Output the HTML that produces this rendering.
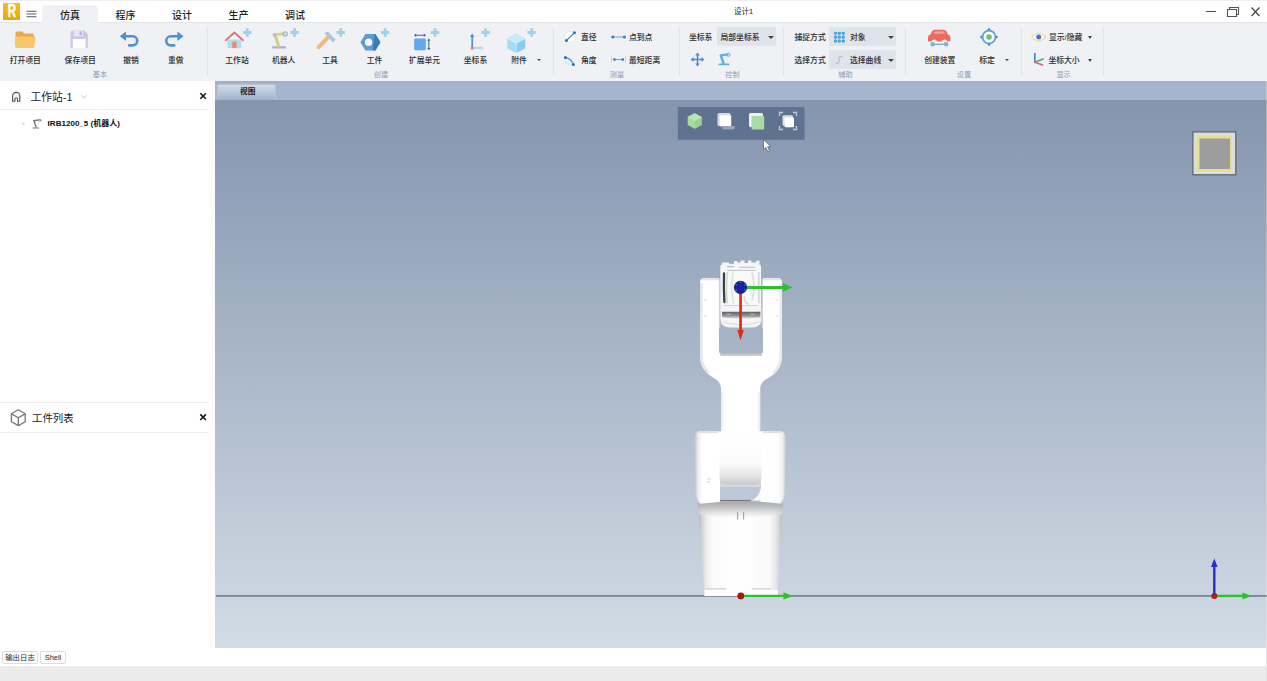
<!DOCTYPE html>
<html lang="zh-CN">
<head>
<meta charset="utf-8">
<title>设计1</title>
<style>
*{box-sizing:border-box;margin:0;padding:0}
html,body{width:1267px;height:681px;overflow:hidden;background:#fff}
body{position:relative;font-family:"Liberation Sans","Noto Sans CJK SC",sans-serif;color:#222;-webkit-font-smoothing:antialiased}
.abs{position:absolute}
.t{position:absolute;white-space:nowrap;text-align:center;transform:translateX(-50%)}
.tl{position:absolute;white-space:nowrap}
/* title / tab row */
#titlebar{left:0;top:0;width:1267px;height:22px;background:#fff;border-top:1px solid #efefef}
.tab{z-index:2;font-size:10px;line-height:14px;top:7.5px;color:#1c1c1c;font-weight:500}
#tabactive{z-index:1;left:42px;top:4px;width:56px;height:19px;background:#f0f1f4;border-radius:4px 4px 0 0}
/* ribbon */
#ribbon{left:0;top:22px;width:1267px;height:59px;background:#f0f1f4;border-top:1px solid #e4e5e8}
.lbl{font-size:7.8px;line-height:10px;top:55.5px;color:#2a2a2a;font-weight:500}
.grp{font-size:7.2px;line-height:10px;top:69.5px;color:#8b9bb8}
.sep{position:absolute;top:27px;width:1px;height:49px;background:#e1e3e8}
.sm{font-size:7.8px;line-height:10px;color:#2a2a2a;font-weight:500}
.combo{position:absolute;background:#dfe3ea;height:19px}
.dd{position:absolute;width:0;height:0;border-left:3px solid transparent;border-right:3px solid transparent;border-top:3.5px solid #444}
.dds{position:absolute;width:0;height:0;border-left:2px solid transparent;border-right:2px solid transparent;border-top:2.5px solid #444}
/* left panel */
#left{left:0;top:81px;width:215px;height:567px;background:#fff}
#leftgap{left:209.5px;top:81px;width:5.5px;height:567px;background:#fdfcfb}
.hline{position:absolute;left:0;width:209px;height:1px;background:#ececec}
/* viewport */
#vp{left:215px;top:81px;width:1052px;height:567px;overflow:hidden;background:linear-gradient(#8595ae,#d2dce6);}
#vptabs{left:0;top:0;width:1052px;height:19px;background:linear-gradient(#a3afc2,#a5b5ce 4px,#a6b6ce)}
#vptab{left:1.5px;top:3px;width:59.5px;height:16px;padding-left:3px;background:linear-gradient(#d3dbe8,#a3b1c8);border:1px solid #b9c3d4;border-bottom:none;border-radius:2px 2px 0 0;font-size:7.7px;line-height:14px;text-align:center;color:#222;font-weight:bold}
#vpbody{left:0;top:19px;width:1052px;height:548px;background:linear-gradient(#8595ae,#d2dce6)}
/* bottom */
#bottom{left:0;top:648px;width:1267px;height:18px;background:#fff}
#status{left:0;top:666px;width:1267px;height:15px;background:#ebebeb}
.btab{position:absolute;top:3px;height:13px;border:1px solid #dcdcdc;border-radius:2px;font-size:7.4px;line-height:11px;text-align:center;color:#222;background:#fff}
</style>
</head>
<body>
<!-- TITLE / TAB ROW -->
<div id="titlebar" class="abs">
  <div id="tabactive" class="abs"></div>
  <svg class="abs" style="left:3px;top:2px" width="17" height="17" viewBox="0 0 17 17">
    <defs><linearGradient id="lg" x1="0" y1="0" x2="0" y2="1"><stop offset="0" stop-color="#f5bf18"/><stop offset="1" stop-color="#eaa40e"/></linearGradient></defs>
    <rect width="17" height="17" fill="url(#lg)"/>
    <text x="0" y="0" text-anchor="middle" transform="translate(9 14.1) scale(.66 1)" font-family="Liberation Sans, sans-serif" font-weight="bold" font-size="17.5" fill="#fff" stroke="#fff" stroke-width=".5">R</text>
  </svg>
  <svg class="abs" style="left:26px;top:9px" width="11" height="8" viewBox="0 0 11 8"><path d="M0.5 1.2H10.5M0.5 4H10.5M0.5 6.7H10.5" stroke="#5a5a5a" stroke-width="1.1"/></svg>
  <div class="t tab" style="left:70px">仿真</div>
  <div class="t tab" style="left:125.5px">程序</div>
  <div class="t tab" style="left:182px">设计</div>
  <div class="t tab" style="left:238.5px">生产</div>
  <div class="t tab" style="left:295px">调试</div>
  <div class="t" style="left:743.5px;top:6px;font-size:7.5px;line-height:10px;color:#222">设计1</div>
  <!-- window controls -->
  <svg class="abs" style="left:1200px;top:1.5px" width="64" height="18" viewBox="0 0 64 18">
    <path d="M6 8.5H16" stroke="#555" stroke-width="1.1" fill="none"/>
    <path d="M27.5 6.5H36.5V13.5H27.5ZM29.5 6.5V4.5H38.5V11.5H36.5" stroke="#555" stroke-width="1.1" fill="none"/>
    <path d="M51.5 4.5L59.5 13M59.5 4.5L51.5 13" stroke="#444" stroke-width="1.2" fill="none"/>
  </svg>
</div>

<!-- RIBBON -->
<div id="ribbon" class="abs"></div>
<div id="ribbonitems" class="abs" style="left:0;top:0;width:1267px;height:81px">
<div class="t lbl" style="left:25.3px">打开项目</div>
<div class="t lbl" style="left:80.2px">保存项目</div>
<div class="t lbl" style="left:131px">撤销</div>
<div class="t lbl" style="left:175.8px">重做</div>
<div class="t lbl" style="left:237px">工作站</div>
<div class="t lbl" style="left:283.7px">机器人</div>
<div class="t lbl" style="left:330px">工具</div>
<div class="t lbl" style="left:374.6px">工件</div>
<div class="t lbl" style="left:424.5px">扩展单元</div>
<div class="t lbl" style="left:475.5px">坐标系</div>
<div class="t lbl" style="left:519px">附件</div>
<div class="t lbl" style="left:939.8px">创建装置</div>
<div class="t lbl" style="left:987px">标定</div>
<div class="t grp" style="left:100px">基本</div>
<div class="t grp" style="left:381px">创建</div>
<div class="t grp" style="left:617px">测量</div>
<div class="t grp" style="left:732.4px">控制</div>
<div class="t grp" style="left:845.4px">辅助</div>
<div class="t grp" style="left:964px">设置</div>
<div class="t grp" style="left:1063.6px">显示</div>
<div class="sep" style="left:206.7px"></div>
<div class="sep" style="left:553px"></div>
<div class="sep" style="left:679px"></div>
<div class="sep" style="left:783.3px"></div>
<div class="sep" style="left:905px"></div>
<div class="sep" style="left:1021px"></div>
<div class="sep" style="left:1103px"></div>
<div class="tl sm" style="left:581px;top:33px">直径</div>
<div class="tl sm" style="left:581px;top:55.6px">角度</div>
<div class="tl sm" style="left:629px;top:33px">点到点</div>
<div class="tl sm" style="left:629px;top:55.6px">最短距离</div>
<div class="tl sm" style="left:689px;top:33px">坐标系</div>
<div class="combo" style="left:717px;top:27px;width:59px"></div>
<div class="tl sm" style="left:720.5px;top:33px">局部坐标系</div>
<div class="dd" style="left:768px;top:35.5px"></div>
<div class="tl sm" style="left:794.5px;top:33px">捕捉方式</div>
<div class="tl sm" style="left:794.5px;top:55.6px">选择方式</div>
<div class="combo" style="left:829px;top:27px;width:67px"></div>
<div class="combo" style="left:829px;top:50px;width:67px"></div>
<div class="tl sm" style="left:850px;top:33px">对象</div>
<div class="tl sm" style="left:850px;top:55.6px">选择曲线</div>
<div class="dd" style="left:888px;top:35.5px"></div>
<div class="dd" style="left:888px;top:58.5px"></div>
<div class="tl sm" style="left:1049px;top:33px">显示/隐藏</div>
<div class="tl sm" style="left:1048.4px;top:55.6px">坐标大小</div>
<div class="dd" style="left:1087.5px;top:36px;border-left-width:2.5px;border-right-width:2.5px;border-top-width:3px"></div>
<div class="dd" style="left:1087.5px;top:58.5px;border-left-width:2.5px;border-right-width:2.5px;border-top-width:3px"></div>
<div class="dds" style="left:536.7px;top:58.5px"></div>
<div class="dds" style="left:1004.7px;top:58.5px"></div>
<svg class="abs" style="left:0;top:0" width="1267" height="81" viewBox="0 0 1267 81"><g>
<path d="M15.5 33.2q0-1.6 1.6-1.6h5.2l1.8 2h8.2q1.6 0 1.6 1.6v11q0 1.6-1.6 1.6h-15.2q-1.6 0-1.6-1.6z" fill="#eaa947"/>
<path d="M15.5 37.8q0-1.4 1.4-1.4h17.2q1.6 0 1.4 1.5l-1.1 8.5q-.2 1.4-1.6 1.4h-15.7q-1.6 0-1.6-1.6z" fill="#f8c66b"/>
</g>
<g>
<path d="M70.5 32q0-1.5 1.5-1.5h12.2l3.6 3.6v12.4q0 1.5-1.5 1.5h-14.3q-1.5 0-1.5-1.5z" fill="#cfc6ea"/>
<rect x="74" y="30.5" width="9" height="5.8" fill="#e9e6f6"/>
<rect x="79.6" y="31.4" width="2.1" height="3.8" fill="#a6b7e0"/>
<rect x="72.8" y="39" width="12.8" height="9" fill="#ffffff"/>
</g>
<g fill="none" stroke="#4f8fd2" stroke-width="2.6" stroke-linecap="round" stroke-linejoin="round">
<path d="M124 36.2h8.6a4.6 4.6 0 0 1 0 9.2h-3.4"/>
</g><path d="M119.8 36.2l6.2-4.8v9.6z" fill="#4f8fd2"/>
<g fill="none" stroke="#4f8fd2" stroke-width="2.6" stroke-linecap="round" stroke-linejoin="round">
<path d="M179.4 36.2h-8.6a4.6 4.6 0 0 0 0 9.2h3.4"/>
</g><path d="M183.6 36.2l-6.2-4.8v9.6z" fill="#4f8fd2"/>
<g>
<path d="M227.6 39.5h13.6v8.6h-13.6z" fill="#a9dff0"/>
<path d="M225.8 40.2l8.6-7.8l8.6 7.8" fill="none" stroke="#e8737b" stroke-width="2" stroke-linecap="round" stroke-linejoin="round"/>
<rect x="232.2" y="41.6" width="4.4" height="6.5" fill="#f08a6c"/>
</g><path d="M245.9 28.3h2.8v2.8h2.8v2.8h-2.8v2.8h-2.8v-2.8h-2.8v-2.8h2.8z" fill="#9acdec" opacity=".92"/>
<g>
<path d="M273 47.4h12" stroke="#b4a8dc" stroke-width="2.2" stroke-linecap="round"/>
<path d="M278.6 46l-3.4-10.8" stroke="#cfd27a" stroke-width="3" stroke-linecap="round"/>
<path d="M274.4 34.6l9.6-.8" stroke="#d9d27a" stroke-width="2.6" stroke-linecap="round"/>
<circle cx="285.2" cy="34" r="2.1" fill="none" stroke="#9bb6d8" stroke-width="1.3"/>
<circle cx="274.4" cy="34.8" r="1.9" fill="#c3b5e6"/>
</g><path d="M293.1 28.3h2.8v2.8h2.8v2.8h-2.8v2.8h-2.8v-2.8h-2.8v-2.8h2.8z" fill="#9acdec" opacity=".92"/>
<g>
<path d="M318.6 47.2l9.2-9.6" stroke="#f4b77c" stroke-width="4" stroke-linecap="round"/>
<path d="M324.4 33.2l3.4-1.6l7.8 8l-2.6 2.6z" fill="#a9c3e2"/>
</g><path d="M339.3 28.3h2.8v2.8h2.8v2.8h-2.8v2.8h-2.8v-2.8h-2.8v-2.8h2.8z" fill="#9acdec" opacity=".92"/>
<g>
<path d="M360.4 42.2l5-8.2h10l5 8.2l-5 8.2h-10z" fill="#5c9bd6"/>
<path d="M374.4 34h1l5 8.2l-5 8.2h-2.4z" fill="#3f7ab8"/>
<circle cx="368.6" cy="42.2" r="3.7" fill="#fdf3ee"/>
</g><path d="M383.8 28.3h2.8v2.8h2.8v2.8h-2.8v2.8h-2.8v-2.8h-2.8v-2.8h2.8z" fill="#9acdec" opacity=".92"/>
<g>
<rect x="414.2" y="38.6" width="11.6" height="11.6" rx="1" fill="#62a8f0"/>
<path d="M414.6 35.2h10.8M428.8 39.6v9.6" stroke="#3b6ea8" stroke-width="1.1"/>
<path d="M414 35.2l2.2-1.7v3.4zM426 35.2l-2.2-1.7v3.4zM428.8 38.6l-1.7 2.2h3.4zM428.8 50.2l-1.7-2.2h3.4z" fill="#3b6ea8"/>
</g><path d="M433.6 28.3h2.8v2.8h2.8v2.8h-2.8v2.8h-2.8v-2.8h-2.8v-2.8h2.8z" fill="#9acdec" opacity=".92"/>
<g>
<path d="M472.2 35.5v12.2" stroke="#4f8fd2" stroke-width="1.7"/>
<path d="M472.2 33.6l-2.3 3.4h4.6z" fill="#4f8fd2"/>
<path d="M472.2 48h9" stroke="#9ecbe6" stroke-width="1.5"/>
<path d="M484 48l-3.2-2v4z" fill="#c9d6e4"/>
<circle cx="472.2" cy="48" r="1.7" fill="#ef7f7f"/>
</g><path d="M484.2 28.3h2.8v2.8h2.8v2.8h-2.8v2.8h-2.8v-2.8h-2.8v-2.8h2.8z" fill="#9acdec" opacity=".92"/>
<g>
<path d="M516.2 33.6l9 4.8v9.8l-9 4.8l-9-4.8v-9.8z" fill="#a3dcf6"/>
<path d="M516.2 43.2l9-4.8v9.8l-9 4.8z" fill="#8bcdf0"/>
<path d="M516.2 43.2l-9-4.8l9-4.8l9 4.8z" fill="#c4ebfb"/>
<path d="M516.2 52.6v-9.4l-8.6-4.6M516.2 43.2l8.6-4.6" fill="none" stroke="#e6f6fe" stroke-width=".7"/>
</g><path d="M530.2 28.3h2.8v2.8h2.8v2.8h-2.8v2.8h-2.8v-2.8h-2.8v-2.8h2.8z" fill="#9acdec" opacity=".92"/>
<g>
<circle cx="570.3" cy="36.8" r="5.6" fill="#fff" stroke="#dfe7f0" stroke-width=".8"/>
<path d="M566.6 40.4l7.6-7.4" stroke="#3f8fd6" stroke-width="1.3"/>
<circle cx="566.4" cy="40.6" r="1.5" fill="#2d6fb4"/><circle cx="574.4" cy="32.8" r="1.5" fill="#2d6fb4"/>
</g>
<g>
<path d="M565.6 57.6q5.6.8 7.6 6.6" fill="none" stroke="#3f8fd6" stroke-width="1.3"/>
<path d="M565.6 58v6.2h7.4" fill="none" stroke="#dbe6f2" stroke-width="1"/>
<circle cx="565.4" cy="57.4" r="1.5" fill="#2d6fb4"/><circle cx="573.4" cy="64.4" r="1.5" fill="#2d6fb4"/>
</g>
<g>
<path d="M613 37h11" stroke="#5aa6d8" stroke-width="1"/>
<circle cx="612.8" cy="37" r="1.5" fill="#2d7fc0"/><circle cx="624.4" cy="37" r="1.5" fill="#2d7fc0"/>
</g>
<g>
<path d="M611.6 56.4v6.6M625.6 56.4v6.6" stroke="#bcd4ea" stroke-width="1"/>
<path d="M614 59.6h9" stroke="#5aa6d8" stroke-width="1"/>
<circle cx="614.4" cy="59.6" r="1.4" fill="#2d7fc0"/><circle cx="622.8" cy="59.6" r="1.4" fill="#2d7fc0"/>
</g>
<g fill="#4f8fd2">
<path d="M696.7 54.5h1.6v10h-1.6z"/><path d="M692.5 58.7h10v1.6h-10z"/>
<path d="M697.5 52.6l2.4 2.9h-4.8zM697.5 66.4l2.4-2.9h-4.8zM690.6 59.5l2.9-2.4v4.8zM704.4 59.5l-2.9-2.4v4.8z"/>
</g>
<g>
<path d="M719.4 64.4h9" stroke="#5fb0e0" stroke-width="1.9" stroke-linecap="round"/>
<path d="M723.6 63.4l-2.6-7.4" stroke="#5fb0e0" stroke-width="2.4" stroke-linecap="round"/>
<path d="M720.6 55.4l7-1" stroke="#5fb0e0" stroke-width="2.2" stroke-linecap="round"/>
<circle cx="728.4" cy="54.8" r="1.6" fill="none" stroke="#5fb0e0" stroke-width="1"/>
</g>
<g fill="#2b8cc6"><rect x="834.2" y="32" width="2.6" height="2.6"/><rect x="834.2" y="35.9" width="2.6" height="2.6"/><rect x="834.2" y="39.8" width="2.6" height="2.6"/><rect x="838.1" y="32" width="2.6" height="2.6"/><rect x="838.1" y="35.9" width="2.6" height="2.6"/><rect x="838.1" y="39.8" width="2.6" height="2.6"/><rect x="842" y="32" width="2.6" height="2.6"/><rect x="842" y="35.9" width="2.6" height="2.6"/><rect x="842" y="39.8" width="2.6" height="2.6"/></g><path d="M835.5 31.6v11.2M839.4 31.6v11.2M843.3 31.6v11.2M833.8 33.3h11.2M833.8 37.2h11.2M833.8 41.1h11.2" stroke="#5ab2e0" stroke-width=".8"/>
<path d="M835.6 63.2h2.4q1 0 1-1v-4.6q0-1 1-1h2.6" fill="none" stroke="#c9a6dc" stroke-width="1"/>
<g>
<path d="M928 37.8q0-2.6 2.4-3.2l1.7-3.3q.8-1.6 2.6-1.6h9q1.8 0 2.6 1.6l1.7 3.3q2.4.6 2.4 3.2v2.8q0 1-1 1h-2a3.1 3.1 0 0 0-5.8 0h-4.4a3.1 3.1 0 0 0-5.8 0h-2.4q-1 0-1-1z" fill="#ee6a5e"/>
<path d="M933.4 33.8l1.2-2.3h9.2l1.2 2.3z" fill="#f7a59c"/>
<path d="M933 44.3h13" stroke="#6fa3c8" stroke-width="1.2"/>
<circle cx="932.7" cy="44.3" r="2.3" fill="#7fb0d0"/><circle cx="946.1" cy="44.3" r="2.3" fill="#7fb0d0"/>
</g>
<g>
<path d="M989 27.7l2.2 3h-4.4zM989 46.3l2.2-3h-4.4zM979.7 37l3-2.2v4.4zM998.3 37l-3-2.2v4.4z" fill="#3f7cc6"/>
<circle cx="989" cy="37" r="6.4" fill="#fff" stroke="#5a9ee0" stroke-width="1.7"/>
<circle cx="989" cy="37" r="2.8" fill="#6cc070"/>
</g>
<g>
<path d="M1031.6 37q7-7.6 14.2 0q-7.2 7.6-14.2 0z" fill="#fff" stroke="#ecd89a" stroke-width="1.1"/>
<circle cx="1038.7" cy="37" r="2.5" fill="#3f76c8"/>
</g>
<g fill="none" stroke-width="1.5" stroke-linecap="round">
<path d="M1034.8 53.4v8.8" stroke="#2f7fb8"/>
<path d="M1034.8 62.2l8.4-3.2" stroke="#4fa870"/>
<path d="M1034.8 62.2l7.8 2.8" stroke="#e0606a"/>
</g></svg>
</div>

<!-- LEFT PANEL -->
<div id="left" class="abs">
<div class="hline" style="top:27.5px"></div>
<div class="hline" style="top:320.5px"></div>
<div class="hline" style="top:351px"></div>
<svg class="abs" style="left:0;top:0" width="213" height="567" viewBox="0 81 213 567">
<path d="M12.6 101.2v-5.2a3.6 3.6 0 0 1 7.2 0v5.2h-2.3v-2.1a1.3 1.3 0 0 0-2.6 0v2.1z" fill="none" stroke="#4a4a4a" stroke-width="1.1" stroke-linejoin="round"/>
<path d="M81.3 95.2l2.7 2.6l2.7-2.6" fill="none" stroke="#c4c8d0" stroke-width="1"/>
<path d="M200.3 93.2l5.6 5.6M205.9 93.2l-5.6 5.6" stroke="#111" stroke-width="1.5"/>
<path d="M200.3 414.4l5.6 5.6M205.9 414.4l-5.6 5.6" stroke="#111" stroke-width="1.5"/>
<circle cx="23.4" cy="123.7" r="1.3" fill="#d8d8d8"/>
<g stroke="#777" fill="none" stroke-width="1" stroke-linecap="round">
<path d="M33 128h5.6"/><path d="M36 127l-1.8-5.8" stroke-width="1.4"/><path d="M33.6 120.6l5-.6" stroke-width="1.3"/><circle cx="39.8" cy="120.2" r="1.1" stroke-width=".8"/>
</g>
<g fill="none" stroke="#777" stroke-width="1.3" stroke-linejoin="round">
<path d="M18.3 409.8l6.9 3.9v8l-6.9 3.9l-6.9-3.9v-8z"/><path d="M11.6 413.9l6.7 3.8l6.7-3.8M18.3 417.7v7.6"/>
</g>
</svg>
<div class="tl" style="left:30.4px;top:8.5px;font-size:10.8px;line-height:14px;color:#1a1a1a">工作站-1</div>
<div class="tl" style="left:47.6px;top:37.7px;font-size:8.05px;line-height:10px;font-weight:bold;color:#111">IRB1200_5 (机器人)</div>
<div class="tl" style="left:32px;top:330.8px;font-size:10.4px;line-height:14px;color:#1a1a1a">工件列表</div>
</div>
<div id="leftgap" class="abs"></div>

<!-- VIEWPORT -->
<div id="vp" class="abs">
  <div id="vpbody" class="abs"></div>
  <div id="vptabs" class="abs"><div id="vptab" class="abs">视图</div></div>
<svg class="abs" style="left:0;top:0" width="1052" height="567" viewBox="215 81 1052 567">
<defs>
<linearGradient id="body" x1="0" y1="0" x2="1" y2="0"><stop offset="0" stop-color="#e4e6e9"/><stop offset=".12" stop-color="#fafafa"/><stop offset=".5" stop-color="#ffffff"/><stop offset=".88" stop-color="#f6f6f7"/><stop offset="1" stop-color="#dcdfe3"/></linearGradient>
<linearGradient id="base" x1="0" y1="0" x2="0" y2="1"><stop offset="0" stop-color="#f4f4f5"/><stop offset=".8" stop-color="#ececee"/><stop offset="1" stop-color="#fbfbfb"/></linearGradient>
</defs>
<!-- horizon -->
<rect x="216" y="595.2" width="1051" height="1.5" fill="#6a7482"/>
<defs>
<linearGradient id="gH" x1="0" y1="0" x2="1" y2="0"><stop offset="0" stop-color="#d9dcdf"/><stop offset=".1" stop-color="#f7f7f8"/><stop offset=".5" stop-color="#ffffff"/><stop offset=".9" stop-color="#f4f5f6"/><stop offset="1" stop-color="#d5d8dc"/></linearGradient>
<linearGradient id="gCyl" x1="0" y1="0" x2="0" y2="1"><stop offset="0" stop-color="#ffffff"/><stop offset=".6" stop-color="#fbfbfb"/><stop offset=".86" stop-color="#e2e3e5"/><stop offset="1" stop-color="#c9cbce"/></linearGradient>
<linearGradient id="gWin" x1="0" y1="0" x2="0" y2="1"><stop offset="0" stop-color="#f3f3f4"/><stop offset=".7" stop-color="#fdfdfd"/><stop offset="1" stop-color="#d9dadc"/></linearGradient>
<linearGradient id="gBase" x1="0" y1="0" x2="0" y2="1"><stop offset="0" stop-color="#eeeff0"/><stop offset=".12" stop-color="#f8f8f9"/><stop offset=".85" stop-color="#f1f1f3"/><stop offset=".93" stop-color="#e4e5e7"/><stop offset=".94" stop-color="#fdfdfd"/><stop offset="1" stop-color="#ffffff"/></linearGradient>
<linearGradient id="gWr" x1="0" y1="0" x2="0" y2="1"><stop offset="0" stop-color="#cfd0d2"/><stop offset=".35" stop-color="#e9e9ea"/><stop offset="1" stop-color="#f7f7f7"/></linearGradient>
<linearGradient id="gBand" x1="0" y1="0" x2="0" y2="1"><stop offset="0" stop-color="#5f6063"/><stop offset=".55" stop-color="#8b8c8f"/><stop offset="1" stop-color="#d9dadb"/></linearGradient>
<linearGradient id="gBaseH" x1="0" y1="0" x2="1" y2="0"><stop offset="0" stop-color="#a9acb1"/><stop offset=".04" stop-color="#cdd0d3"/><stop offset=".1" stop-color="#ebeced"/><stop offset=".17" stop-color="#fafafa"/><stop offset=".5" stop-color="#ffffff"/><stop offset=".84" stop-color="#f9f9f9"/><stop offset=".91" stop-color="#e9eaec"/><stop offset=".96" stop-color="#d2d4d7"/><stop offset="1" stop-color="#b1b4b9"/></linearGradient>
<linearGradient id="gBaseTop" x1="0" y1="0" x2="0" y2="1"><stop offset="0" stop-color="#a6a7a9"/><stop offset=".4" stop-color="#c2c3c5" stop-opacity=".95"/><stop offset=".8" stop-color="#e6e6e7" stop-opacity=".6"/><stop offset="1" stop-color="#f6f6f6" stop-opacity="0"/></linearGradient>
<linearGradient id="gShL" x1="0" y1="0" x2="1" y2="0"><stop offset="0" stop-color="#c3c6ca"/><stop offset=".14" stop-color="#eceded"/><stop offset=".3" stop-color="#ffffff"/><stop offset="1" stop-color="#ffffff"/></linearGradient>
<linearGradient id="gShR" x1="0" y1="0" x2="1" y2="0"><stop offset="0" stop-color="#ffffff"/><stop offset=".7" stop-color="#fdfdfd"/><stop offset=".88" stop-color="#eeeff0"/><stop offset="1" stop-color="#cfd2d6"/></linearGradient>
</defs>
<g id="robot">
<!-- base -->
<path d="M698 503H782.7L777.9 596H704.4Z" fill="url(#gBaseH)"/>
<path d="M707 588.8h19M752 588.8h19" stroke="#cfd0d2" stroke-width="1.3"/>
<rect x="704.5" y="590" width="73.3" height="6" fill="#fdfdfd"/>
<!-- shoulder blocks -->
<path d="M694.8 437Q694.8 431 701 431H718Q720 431 720 433V506H703Q697 502 695.6 494Q694.8 470 694.8 437Z" fill="url(#gShL)"/>
<path d="M785.4 437Q785.4 431 779 431H762.5Q760.5 431 760.5 433V506H777.5Q783.5 502 784.6 494Q785.4 470 785.4 437Z" fill="url(#gShR)"/>
<path d="M699 432H718M763 432H781" stroke="#d4d6d9" stroke-width="1.4"/>
<path d="M707 479h4M707 482h3" stroke="#d0d2d5" stroke-width="1"/>
<!-- central cylinder -->
<path d="M719.5 431.5H761.4V478Q761.4 484 755 484H726Q719.5 484 719.5 478Z" fill="url(#gCyl)"/>
<!-- window (see-through) -->
<path d="M720 484.5H761V487Q759 497 752 500.5H720Z" fill="#bcc8d6"/>
<path d="M726 484.5H755Q759 484.2 761 481V487H720V481Q722 484.2 726 484.5Z" fill="#d7d8da"/>
<path d="M761 486Q760 496 751.5 500.5H761Z" fill="#fafafa"/>
<path d="M760.8 486Q759.5 496 751.5 500.5" stroke="#c9cacc" stroke-width="1" fill="none"/>
<path d="M720 500.6H751" stroke="#77797c" stroke-width="1.3"/>
<path d="M697.5 504Q740 498.5 783 504L782.3 514Q740 523 698.4 514Z" fill="url(#gBaseTop)"/>
<path d="M737.6 512v7.5M743.6 512v7.5" stroke="#a0a1a4" stroke-width="1.1"/>
<!-- fork + neck -->
<path d="M700 282.5Q700 278 704.5 278H719V351Q719 354 722 354H760Q763 354 763 351V278H777.5Q782 278 782 282.5V355C782 368 776 373 769 377.5Q760.5 381.5 760.2 388V432.6H721V388Q720.6 381.5 713 377.5C706 373 700 368 700 355Z" fill="#ffffff"/>
<path d="M701.3 283V355Q701.3 367 709 373" stroke="#e4e6e9" stroke-width="2.6" fill="none"/>
<path d="M780.7 283V355Q780.7 367 773 373" stroke="#e9ebed" stroke-width="2.6" fill="none"/>
<path d="M702 279.2H719M763 279.2H780" stroke="#dfe1e4" stroke-width="2"/>
<path d="M719.6 279V328M762.3 279V328" stroke="#cfd1d5" stroke-width="1.4"/>
<path d="M720 355H762" stroke="#b9bbc0" stroke-width="1.6"/>
<path d="M722.2 392V431M759 392V431" stroke="#eeeff1" stroke-width="2.2"/>
<path d="M704 300h2M704 316h2M776 300h2M776 316h2" stroke="#d5d7da" stroke-width="1"/>
<!-- wrist lower -->
<path d="M720.5 309H761.4V319Q761.4 327.5 752 327.5H730Q720.5 327.5 720.5 319Z" fill="#f6f6f6"/>
<path d="M722 311.6H760.4V317.4Q741 319.4 722 317.4Z" fill="url(#gBand)"/>
<path d="M726 314.3h5M750 314.3h5" stroke="#b9babc" stroke-width="1.1"/>
<path d="M723 322q18 5.5 36.5 0" stroke="#e3e4e6" stroke-width="1.4" fill="none"/>
<!-- head box -->
<path d="M720.3 267Q720.3 264 723.3 264H758Q761 264 761 267V309.5Q761 311.6 759 311.6H722.3Q720.3 311.6 720.3 309.5Z" fill="#f6f6f7"/>
<path d="M722 264v-1.5h7v1.2h5v-2.7h3.5v1.5h3v-2h4v2.5h3.5v-2.5h3.5v2h4.5v-1.8h3.5v3.3z" fill="#f3f3f4"/>
<path d="M727 266.6h7M739 267.2h16" stroke="#bfc0c3" stroke-width="1.1"/>
<rect x="722.6" y="270" width="37.4" height="35.5" rx="5" fill="#f9f9f9"/>
<path d="M724 273.5Q723.6 288 724.4 302" stroke="#3c3d40" stroke-width="2.3" fill="none" stroke-linecap="round"/>
<path d="M727.5 272Q725.6 288 727.5 303.5" stroke="#cfd0d2" stroke-width="1.4" fill="none"/>
<path d="M733 271.5Q730.5 288 733.5 304" stroke="#e1e2e4" stroke-width="1.6" fill="none"/>
<path d="M752 272Q756 288 752 300" stroke="#dcdde0" stroke-width="1.6" fill="none"/>
<path d="M744 296q0 7 5 8.5" stroke="#d9dadd" stroke-width="1.4" fill="none"/>
<path d="M758.8 272V303" stroke="#c9cacd" stroke-width="1.2"/>
<path d="M727 270.4H756" stroke="#c3c4c7" stroke-width="1"/>
<path d="M724 305.6H758" stroke="#cfd0d3" stroke-width="1"/>
</g>

<g id="gizmos">
<!-- TCP frame -->
<path d="M741 286h43v3h-43z" fill="#2fc02f"/><path d="M783 283.2L792.4 287.5L783 291.8Z" fill="#2fc02f"/>
<path d="M739.2 288h2.7v43h-2.7z" fill="#e22a1c"/><path d="M737.3 330L740.55 340.4L743.8 330Z" fill="#e22a1c"/>
<circle cx="740.5" cy="287.4" r="6.6" fill="#14267e"/>
<circle cx="740.5" cy="287.4" r="3.6" fill="#1a1fb0"/>
<g fill="#6a8fd0"><circle cx="740.5" cy="282.3" r=".7"/><circle cx="744.9" cy="284.9" r=".7"/><circle cx="744.9" cy="289.9" r=".7"/><circle cx="736.1" cy="284.9" r=".7"/><circle cx="736.1" cy="289.9" r=".7"/></g>
<!-- base frame -->
<path d="M741 594.7h43v2.4h-43z" fill="#2fc02f"/><path d="M783.5 592.2L793 595.9L783.5 599.6Z" fill="#2fc02f"/>
<circle cx="740.8" cy="595.9" r="3.4" fill="#a31616"/>
<!-- world triad -->
<path d="M1213.1 596v-30h2.4v30z" fill="#2a2ec8"/><path d="M1211 567L1214.3 558.4L1217.6 567Z" fill="#2a2ec8"/>
<path d="M1214 594.7h29v2.4h-29z" fill="#2fc02f"/><path d="M1242.5 592.4L1251.6 595.9L1242.5 599.4Z" fill="#2fc02f"/>
<circle cx="1214.3" cy="595.9" r="3" fill="#b01c1c"/>
<!-- view cube -->
<rect x="1192.9" y="131.9" width="42.9" height="42.9" fill="#dddddb" stroke="#59616e" stroke-width="1.2"/>
<rect x="1196.5" y="135.5" width="35.5" height="35.5" fill="#e6df8e"/>
<rect x="1199.5" y="138.5" width="30.5" height="30.5" fill="#9d9d9d"/>
<!-- view toolbar -->
<rect x="677.8" y="107" width="126.8" height="32.8" fill="#5f7390"/>
<g>
 <path d="M694.7 113.2l7 3.8v8l-7 3.8l-7-3.8v-8z" fill="#a6dba3"/>
 <path d="M694.7 121l7-4v8l-7 3.8z" fill="#98d095"/><path d="M694.7 121l-7-4l7-3.8l7 3.8z" fill="#b5e5b2"/>
 <path d="M717.5 114.5q0-1.5 1.5-1.5h10q1.5 0 1.5 1.5v10q0 1.5-1.5 1.5h-10q-1.5 0-1.5-1.5z" fill="#d9dadc"/>
 <rect x="719.8" y="115.2" width="11.4" height="11.4" rx="1" fill="#ffffff"/>
 <rect x="722.5" y="126" width="12" height="3.4" fill="#9aa6b8"/>
 <path d="M749 114.5q0-1.5 1.5-1.5h11q1.5 0 1.5 1.5v11q0 1.5-1.5 1.5h-11q-1.5 0-1.5-1.5z" fill="#f1f1ee"/>
 <rect x="751.6" y="116" width="12.6" height="13.4" rx="1" fill="#a9dba6"/>
 <path d="M779.5 116v-3.5h3.5M793 112.5h3.5v3.5M796.5 126v3.5h-3.5M783 129.5h-3.5v-3.5" fill="none" stroke="#c4cbd6" stroke-width="1.3"/>
 <path d="M782.5 116.5q0-1.2 1.2-1.2h8q1.2 0 1.2 1.2v8q0 1.2-1.2 1.2h-8q-1.2 0-1.2-1.2z" fill="#dcdde0"/>
 <rect x="784.6" y="117.4" width="9.4" height="9.8" rx="1" fill="#ffffff"/>
</g>
<!-- cursor -->
<path d="M763.5 139.5v10.2l2.4-2.3l1.9 4.3l1.7-.8l-1.9-4.2h3.4z" fill="#ffffff" stroke="#5a6270" stroke-width=".8" stroke-linejoin="round"/>
</g>

</svg>
</div>

<!-- BOTTOM -->
<div id="bottom" class="abs">
  <div class="btab" style="left:2px;width:36px">输出日志</div>
  <div class="btab" style="left:40px;width:26px">Shell</div>
</div>
<div id="status" class="abs"></div>
<div class="abs" style="left:1266px;top:81px;width:1px;height:567px;background:rgba(255,255,255,.28)"></div>
<div class="abs" style="left:1265.5px;top:648px;width:1.5px;height:33px;background:#e2e2e2"></div>
</body>
</html>
